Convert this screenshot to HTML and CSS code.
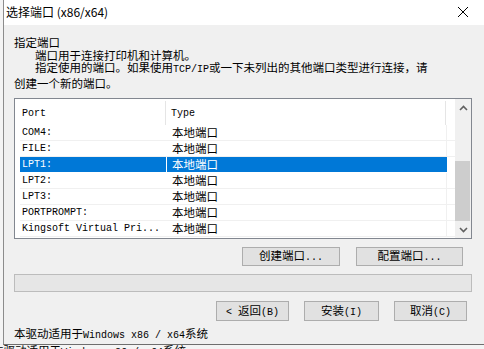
FILE: index.html
```html
<!DOCTYPE html>
<html lang="zh-CN">
<head>
  <meta charset="UTF-8">
  <title>选择端口 (x86/x64)</title>
  <link rel="stylesheet" href="styles.css">
</head>
<body>
  <div class="dialog">
    <div class="titlebar">
      <span class="title">选择端口 (x86/x64)</span>
      <svg class="close" width="12" height="12" viewBox="0 0 12 12">
        <path d="M1 1 L11 11 M11 1 L1 11" stroke="#000" stroke-width="1" fill="none"/>
      </svg>
    </div>

    <div class="content">
      <div class="intro">
        <div>指定端口</div>
        <div class="indent">端口用于连接打印机和计算机。</div>
        <div class="indent">指定使用的端口。如果使用<span class="lat">TCP/IP</span>或一下未列出的其他端口类型进行连接，请</div>
        <div>创建一个新的端口。</div>
      </div>

      <div class="listbox">
        <div class="list">
          <div class="head">
            <div class="col1">Port</div>
            <div class="col2">Type</div>
          </div>
          <div class="row"><div class="col1">COM4:</div><div class="col2">本地端口</div></div>
          <div class="row"><div class="col1">FILE:</div><div class="col2">本地端口</div></div>
          <div class="row selected"><div class="col1">LPT1:</div><div class="col2">本地端口</div></div>
          <div class="row"><div class="col1">LPT2:</div><div class="col2">本地端口</div></div>
          <div class="row"><div class="col1">LPT3:</div><div class="col2">本地端口</div></div>
          <div class="row"><div class="col1">PORTPROMPT:</div><div class="col2">本地端口</div></div>
          <div class="row"><div class="col1">Kingsoft Virtual Pri...</div><div class="col2">本地端口</div></div>
        </div>
        <div class="scrollbar">
          <div class="arrow">
            <svg width="9" height="6" viewBox="0 0 9 6"><path d="M1 5 L4.5 1.5 L8 5" stroke="#606060" stroke-width="1.6" fill="none"/></svg>
          </div>
          <div class="track"><div class="thumb"></div></div>
          <div class="arrow">
            <svg width="9" height="6" viewBox="0 0 9 6"><path d="M1 1 L4.5 4.5 L8 1" stroke="#606060" stroke-width="1.6" fill="none"/></svg>
          </div>
        </div>
      </div>

      <div class="port-buttons">
        <button class="btn btn-create">创建端口<span class="lat">...</span></button>
        <button class="btn btn-config">配置端口<span class="lat">...</span></button>
      </div>

      <div class="progress"></div>

      <div class="nav-buttons">
        <button class="btn btn-back"><span class="lat lt">&lt;</span>返回<span class="lat">(B)</span></button>
        <button class="btn btn-install">安装<span class="lat">(I)</span></button>
        <button class="btn btn-cancel">取消<span class="lat">(C)</span></button>
      </div>

      <div class="note">本驱动适用于<span class="lat">Windows x86 / x64</span>系统</div>
    </div>
  </div>
  <div class="behind">本驱动适用于<span class="lat">Windows x86 / x64</span>系统</div>
</body>
</html>
```

FILE: styles.css
```css
body {
  margin: 0;
  width: 484px;
  height: 349px;
  overflow: hidden;
  background: #f4f4f4;
  font-family: "Noto Sans CJK SC", sans-serif;
  font-size: 11.5px;
  color: #000;
}
.lat {
  font-family: "Liberation Mono", monospace;
  font-size: 10px;
}
.lt {
  margin-right: 6px;
}
.dialog {
  margin-left: 3px;
  height: 345px;
  border-left: 1px solid #8c8c8c;
  border-bottom: 1px solid #6e6e6e;
  background: #f0f0f0;
  box-sizing: border-box;
}
.titlebar {
  height: 25px;
  background: #fff;
  display: flex;
  align-items: center;
  justify-content: space-between;
  padding: 0 15px 0 2px;
}
.title {
  font-size: 12px;
  line-height: 14px;
  margin-top: -1px;
}
.close {
  margin-top: -1px;
}
.content {
  padding: 11px 12px 0 10px;
}
.intro {
  line-height: 12.5px;
  white-space: nowrap;
}
.indent {
  padding-left: 21px;
}

/* list */
.listbox {
  margin-top: 9px;
  height: 141px;
  border: 1px solid #828790;
  box-sizing: border-box;
  background: #fff;
  display: flex;
}
.list {
  width: 440px;
  padding-left: 5px;
  box-sizing: border-box;
  font-family: "Liberation Mono", monospace;
  font-size: 10px;
}
.head, .row {
  display: flex;
  box-sizing: border-box;
}
.head {
  height: 26px;
  align-items: center;
}
.row {
  height: 16px;
  line-height: 15px;
  border-bottom: 1px solid #f0f0f0;
}
.col1 {
  width: 146px;
  padding-left: 2px;
  box-sizing: border-box;
  white-space: nowrap;
}
.col2 {
  width: 280px;
  padding-left: 5px;
  margin-left: 1px;
  box-sizing: border-box;
  border-right: 1px solid #f0f0f0;
}
.head .col1 {
  align-self: stretch;
  display: flex;
  align-items: center;
  border-right: 1px solid #e5e5e5;
  margin-top: 2px;
}
.head .col2 {
  align-self: stretch;
  display: flex;
  align-items: center;
  margin-left: 0;
  margin-top: 2px;
  border-right-color: #e5e5e5;
}
.row .col2 {
  font-family: "Noto Sans CJK SC", sans-serif;
  font-size: 11.5px;
}
.row.selected {
  border-bottom-color: #fff;
}
.selected .col1, .selected .col2 {
  background: #0078d7;
  color: #fff;
}
.selected .col2 {
  border-right-color: #0078d7;
}

/* scrollbar */
.scrollbar {
  width: 16px;
  background: #f0f0f0;
  display: flex;
  flex-direction: column;
}
.arrow {
  height: 17px;
  display: flex;
  align-items: center;
  justify-content: center;
}
.track {
  flex: 1;
  display: flex;
  flex-direction: column;
  justify-content: flex-end;
}
.thumb {
  height: 60px;
  margin-right: 1px;
  background: #cdcdcd;
}

/* buttons */
.btn {
  font-family: "Noto Sans CJK SC", sans-serif;
  font-size: 11.5px;
  color: #000;
  background: #e1e1e1;
  border: 1px solid #adadad;
  padding: 0;
  line-height: 15px;
}
.port-buttons {
  margin-top: 8px;
  margin-right: 9px;
  display: flex;
  justify-content: flex-end;
  gap: 16px;
}
.port-buttons .btn {
  height: 19px;
}
.btn-create { width: 98px; }
.btn-config { width: 107px; }

.progress {
  margin-top: 8px;
  height: 18px;
  background: #e6e6e6;
  border: 1px solid #bcbcbc;
  box-sizing: border-box;
}
.nav-buttons {
  margin-top: 9px;
  margin-right: 5px;
  display: flex;
  justify-content: flex-end;
  gap: 15px;
}
.nav-buttons .btn {
  height: 20px;
}
.btn-back { width: 73px; }
.btn-install { width: 75px; }
.btn-cancel { width: 73px; }

.note {
  margin-top: 5px;
  line-height: 14px;
  white-space: nowrap;
}
.behind {
  margin-left: -8px;
  margin-top: -2px;
  line-height: 14px;
  white-space: nowrap;
  color: #000;
}
```
